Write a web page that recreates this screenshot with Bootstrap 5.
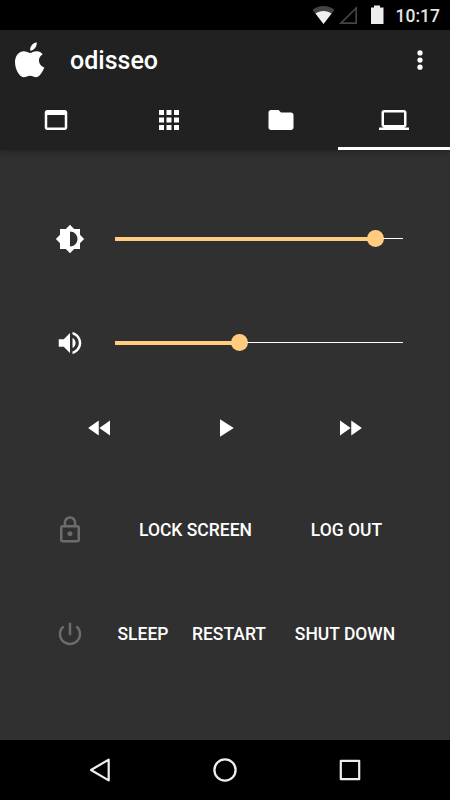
<!DOCTYPE html>
<html lang="en">
<head>
<meta charset="utf-8">
<meta name="viewport" content="width=device-width, initial-scale=1">
<title>odisseo</title>
<link href="https://cdn.jsdelivr.net/npm/bootstrap@5.3.0/dist/css/bootstrap.min.css" rel="stylesheet">
<style>
body { font-family: Roboto, sans-serif; font-weight: 500; width: 450px; height: 800px; background: #303030; overflow: hidden; }
svg { display: block; flex: none; }
.status-bar { height: 30px; background: #000; color: #e4e4e4; font-size: 17.5px; line-height: 30px; padding-right: 10px; }
.clock { padding-top: 2px; }
.app-top { background: #212121; box-shadow: 0 1px 6px rgba(0,0,0,.38); height: 120px; }
.app-title { height: 60px; padding-left: 14px; padding-right: 15px; }
.app-name { font-size: 25px; line-height: 30px; margin-left: 25px; padding-top: 2px; }
.app-tabs { height: 60px; }
.app-tabs .nav-link { padding: 15px 0 0; height: 60px; color: #fff; border-bottom: 3px solid transparent; border-radius: 0; }
.app-tabs .nav-link.active { border-bottom-color: #fff; }
.controls { height: 590px; padding-top: 37px; }
.line { height: 103px; padding-left: 55px; }
.line-tall { height: 105px; }
.line-icon { width: 30px; margin-right: 30px; }
.line-dim { color: #6c6c6c; }
.slider { width: 288px; height: 16px; }
.slider-fill { height: 4px; background: #ffcc80; }
.slider-thumb { width: 17px; height: 17px; border-radius: 50%; background: #ffcc80; flex: none; margin: 0 -1px; }
.slider-rest { height: 1.5px; background: #fff; }
.media { height: 65px; margin-bottom: 18px; }
.media, .sys-nav { padding: 0 85px; }
.action { font-size: 17.5px; line-height: 24px; color: #fff; padding: 0; border: 0; font-weight: 500; white-space: nowrap; }
.sys-nav { height: 60px; background: #000; }
.w-lock { width: 161px; } .w-logout { width: 141px; }
.w-sleep { width: 56px; } .w-restart { width: 116px; } .w-shut { width: 116px; }
</style>
<script src="https://cdn.jsdelivr.net/npm/bootstrap@5.3.0/dist/js/bootstrap.bundle.min.js"></script>
</head>
<body class="text-white">
<div class="status-bar d-flex align-items-center justify-content-end">
  <svg width="84" height="30" viewBox="0 0 84 30">
    <path d="M.5 10C6.500 4.500 16.500 4.500 22.500 10L11.500 24z" fill="#444"/>
    <path d="M3.500 13.500C8 10 15 10 19.500 13.500L11.500 24z" fill="#f0f0f0"/>
    <path d="M29 23.200L44.200 8V23.200z" fill="none" stroke="#444" stroke-width="1.700"/>
    <path d="M59 7.500h3V5.500h6v2h3.500V24H59z" fill="#ececec"/>
  </svg>
  <span class="clock">10:17</span>
</div>

<header class="app-top position-relative">
  <div class="app-title d-flex align-items-center">
    <svg width="31" height="36" viewBox="0 0 31 36" fill="#fff">
      <path d="M16.200 8.800C15.700 4.500 18.700 1 22.700.3 23.200 4.500 20 8.600 16.200 8.800z"/>
      <path d="M28.700 12.300C22.900 15.700 24.200 23.300 30.300 25.600 28.500 30.200 25.600 34.600 22.900 35.100 20.500 35.500 18.800 33.800 16.100 33.800S12 35.400 9.600 35.300C5.400 35 1 27.100 1 20.300 1 13.400 5.200 9.400 9.700 9.300 12.400 9.300 14.200 10.900 16 10.900 17.600 10.900 19.800 9.100 23 9.200 25.300 9.300 27.200 10.300 28.700 12.300z"/>
    </svg>
    <span class="app-name">odisseo</span>
    <svg class="ms-auto" width="30" height="30" viewBox="0 0 24 24" fill="#fff"><circle cx="12" cy="6.300" r="2.100"/><circle cx="12" cy="12" r="2.100"/><circle cx="12" cy="17.700" r="2.100"/></svg>
  </div>
  <nav class="app-tabs nav nav-justified">
    <a class="nav-link d-flex justify-content-center" href="#" aria-label="Windows"><svg width="30" height="30" viewBox="0 0 24 24" fill="#fff"><path d="M19 4H5c-1.110 0-2 .9-2 2v12c0 1.100.89 2 2 2h14c1.100 0 2-.9 2-2V6c0-1.100-.9-2-2-2zm0 14H5V8h14v10z"/></svg></a>
    <a class="nav-link d-flex justify-content-center" href="#" aria-label="Apps"><svg width="30" height="30" viewBox="0 0 24 24" fill="#fff"><path d="M4 8h4V4H4v4zm6 12h4v-4h-4v4zm-6 0h4v-4H4v4zm0-6h4v-4H4v4zm6 0h4v-4h-4v4zm6-10v4h4V4h-4zm-6 4h4V4h-4v4zm6 6h4v-4h-4v4zm0 6h4v-4h-4v4z"/></svg></a>
    <a class="nav-link d-flex justify-content-center" href="#" aria-label="Files"><svg width="30" height="30" viewBox="0 0 24 24" fill="#fff"><path d="M10 4H4c-1.100 0-1.990.9-1.990 2L2 18c0 1.100.9 2 2 2h16c1.100 0 2-.9 2-2V8c0-1.100-.9-2-2-2h-8l-2-2z"/></svg></a>
    <a class="nav-link active d-flex justify-content-center" href="#" aria-label="Computer"><svg width="30" height="30" viewBox="0 0 24 24" fill="#fff"><path d="M20 18c1.100 0 1.990-.9 1.990-2L22 6c0-1.100-.9-2-2-2H4c-1.100 0-2 .9-2 2v10c0 1.100.9 2 2 2H0v2h24v-2h-4zM4 6h16v10H4V6z"/></svg></a>
  </nav>
</header>

<main class="controls">
  <div class="line d-flex align-items-center">
    <div class="line-icon"><svg width="30" height="30" viewBox="0 0 24 24" fill="#fff"><path d="M20 15.310L23.310 12 20 8.690V4h-4.690L12 .69 8.690 4H4v4.690L.69 12 4 15.310V20h4.690L12 23.310 15.310 20H20v-4.690zM12 18V6c3.310 0 6 2.690 6 6s-2.690 6-6 6z"/></svg></div>
    <div class="slider d-flex align-items-center"><div class="slider-fill" style="width:253px"></div><div class="slider-thumb"></div><div class="slider-rest flex-grow-1"></div></div>
  </div>
  <div class="line line-tall d-flex align-items-center">
    <div class="line-icon"><svg width="30" height="30" viewBox="0 0 24 24" fill="#fff"><path d="M3 9v6h4l5 5V4L7 9H3zm13.500 3c0-1.770-1.020-3.290-2.500-4.030v8.050c1.480-.73 2.500-2.250 2.500-4.020zM14 3.230v2.060c2.890.86 5 3.540 5 6.710s-2.110 5.850-5 6.710v2.060c4.010-.91 7-4.490 7-8.770s-2.990-7.860-7-8.770z"/></svg></div>
    <div class="slider d-flex align-items-center"><div class="slider-fill" style="width:117px"></div><div class="slider-thumb"></div><div class="slider-rest flex-grow-1"></div></div>
  </div>
  <div class="media d-flex align-items-center justify-content-between">
    <svg width="30" height="30" viewBox="0 0 24 24" fill="#fff"><path d="M11 18V6l-8.500 6 8.500 6zm.5-6l8.500 6V6l-8.500 6z"/></svg>
    <svg width="30" height="30" viewBox="0 0 24 24" fill="#fff"><path d="M8 5v14l11-7z"/></svg>
    <svg width="30" height="30" viewBox="0 0 24 24" fill="#fff"><path d="M4 18l8.500-6L4 6v12zm9-12v12l8.500-6L13 6z"/></svg>
  </div>
  <div class="line d-flex align-items-center">
    <div class="line-icon line-dim"><svg width="30" height="30" viewBox="0 0 24 24" fill="currentColor"><path d="M12 17c1.100 0 2-.9 2-2s-.9-2-2-2-2 .9-2 2 .9 2 2 2zm6-9h-1V6c0-2.760-2.240-5-5-5S7 3.240 7 6v2H6c-1.100 0-2 .9-2 2v10c0 1.100.9 2 2 2h12c1.100 0 2-.9 2-2V10c0-1.100-.9-2-2-2zM8.900 6c0-1.710 1.390-3.100 3.100-3.100s3.100 1.390 3.100 3.100v2H8.900V6zM18 20H6V10h12v10z"/></svg></div>
    <button class="btn action w-lock">LOCK SCREEN</button>
    <button class="btn action w-logout">LOG OUT</button>
  </div>
  <div class="line line-tall d-flex align-items-center">
    <div class="line-icon line-dim"><svg width="30" height="30" viewBox="0 0 24 24" fill="currentColor"><path d="M13 3h-2v10h2V3zm4.830 2.170l-1.420 1.420C17.990 7.860 19 9.810 19 12c0 3.870-3.130 7-7 7s-7-3.130-7-7c0-2.190 1.010-4.140 2.580-5.420L6.170 5.170C4.230 6.820 3 9.260 3 12c0 4.970 4.030 9 9 9s9-4.030 9-9c0-2.740-1.230-5.180-3.170-6.830z"/></svg></div>
    <button class="btn action w-sleep">SLEEP</button>
    <button class="btn action w-restart">RESTART</button>
    <button class="btn action w-shut">SHUT DOWN</button>
  </div>
</main>

<footer class="sys-nav d-flex align-items-center justify-content-between">
  <svg width="30" height="30" viewBox="0 0 30 30" fill="none" stroke="#eee" stroke-width="2.200" stroke-linejoin="round"><path d="M6 15L23.700 4.600V25.400z"/></svg>
  <svg width="30" height="30" viewBox="0 0 30 30" fill="none" stroke="#eee" stroke-width="2.300"><circle cx="15" cy="15" r="10.600"/></svg>
  <svg width="30" height="30" viewBox="0 0 30 30" fill="none" stroke="#eee" stroke-width="2.200" stroke-linejoin="round"><path d="M5.800 5.800h18.400v18.400H5.800z"/></svg>
</footer>
</body>
</html>
